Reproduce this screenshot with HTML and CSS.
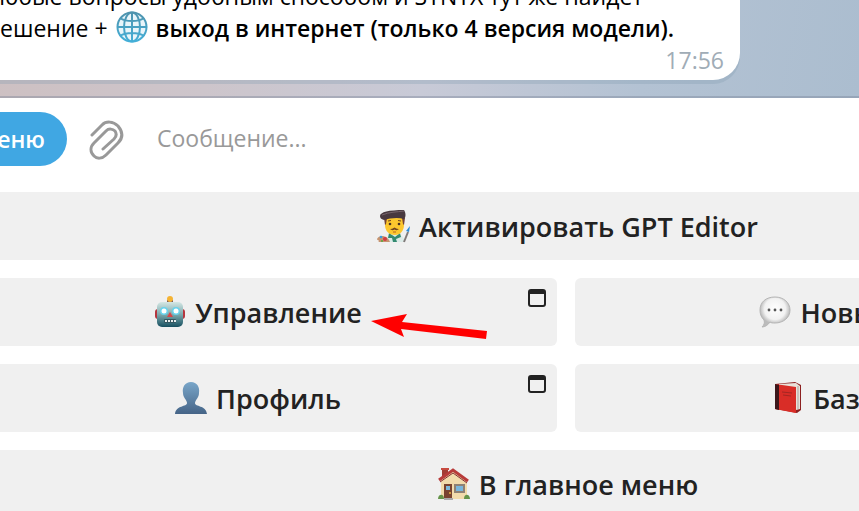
FILE: index.html
```
<!DOCTYPE html>
<html lang="ru">
	<head>
		<meta charset="utf-8">
		<title>Чат</title>
		<link rel="stylesheet" href="styles.css">
	</head>
	<body>
		<main class="chat">
			<div class="history">
				<div class="bubble">
					<p>любые вопросы удобным способом и SYNTX тут же найдет<br>
					решение + <svg class="emoji globe" viewBox="0 0 34 34" aria-hidden="true">
						<defs><linearGradient id="sea" x2="0" y2="1"><stop stop-color="#4f93ad"/><stop offset="1" stop-color="#43afd8"/></linearGradient></defs>
						<circle cx="17" cy="17" r="14.5" fill="#e9f5fa" stroke="url(#sea)" stroke-width="2"/>
						<g fill="none" stroke="url(#sea)" stroke-width="2">
							<ellipse cx="17" cy="17" rx="8" ry="14.5"/>
							<path d="M17 2V32.1M2 17H32.1M5 8C11 12 23 12 29 8M5 26C11 22 23 22 29 26"/>
						</g>
					</svg> <b>выход в интернет (только 4 версия модели).</b></p>
					<time>17:56</time>
				</div>
			</div>

			<form class="composer">
				<button type="button" class="menu">Меню</button>
				<button type="button" class="attach" aria-label="Прикрепить">
					<svg viewBox="0 0 36 40"><path d="M3 15L13 5C17 1 24 1 29 6C34 12 34 18 29 23L17 35C13 39 8 39 5 36C1 32 1 27 5 23L17 11C20 8 24 9 26 11C28 14 27 17 25 19L14 29"/></svg>
				</button>
				<input type="text" class="message" aria-label="Сообщение" placeholder="Сообщение...">
			</form>

			<div class="keyboard">
				<button type="button" class="key wide">
					<svg class="emoji" viewBox="0 0 34 34" aria-hidden="true">
						<path d="M8 33L10 28L15 25H21L26 28L28 33Z" fill="#dcebe8"/>
						<path d="M12 24L18 28L23 24L24 28L19 30L20 33H16L15 29L11 29Z" fill="#348a70"/>
						<path d="M8 9H27V16C27 22 23 26 18 26C12 26 8 22 8 16Z" fill="#fcc72e"/>
						<path d="M7 9H10L9 15L8 16ZM25 9H28L27 16L26 15Z" fill="#754335"/>
						<path d="M3 7C3 3 12 1 27 1C29 4 29 8 27 10C21 8 13 9 7 11C4 10 3 9 3 7Z" fill="#49393f"/>
						<path d="M5 6C12 3 20 3 27 2" stroke="#76646b" fill="none"/>
						<path d="M11 12L14 11.5M21 11.5L24 12" stroke="#70441f" fill="none"/>
						<circle cx="13" cy="15" r="1.3" fill="#493020"/><circle cx="22" cy="15" r="1.3" fill="#493020"/>
						<path d="M13 20Q15 20 17.5 18.5Q20 20 22 20Q20 22 17.5 20.5Q15 22 13 20Z" fill="#70441f"/>
						<path d="M16 23H19" stroke="#b66325"/>
						<path d="M0 30C2 25 11 26 13 33H1C4 31 0 32 0 30Z" fill="#c69470"/>
						<circle cx="4" cy="28" r="1.3" fill="#3b9be0"/><circle cx="8" cy="30" r="2" fill="#d43a44"/><circle cx="5" cy="32" r="1" fill="#55a93d"/>
						<path d="M27 33L31 23" stroke="#807a79" stroke-width="2"/><path d="M29 22L33 17L32 23Z" fill="#298bd8"/>
					</svg>
					<span>Активировать GPT Editor</span>
				</button>

				<button type="button" class="key">
					<svg class="emoji" viewBox="0 0 34 34" aria-hidden="true">
						<defs><linearGradient id="metal" x2="0" y2="1"><stop stop-color="#d5e7e4"/><stop offset=".5" stop-color="#7ba9ad"/><stop offset="1" stop-color="#174f60"/></linearGradient></defs>
						<rect x="2" y="14" width="30" height="10" rx="3" fill="#b5353e"/>
						<path d="M14 5H20V9H14Z" fill="#66506c"/><circle cx="17" cy="4" r="3" fill="#f4b334"/>
						<rect x="4" y="7" width="26" height="25" rx="5" fill="url(#metal)"/>
						<circle cx="11" cy="16" r="4" fill="#68d3ed"/><circle cx="23" cy="16" r="4" fill="#68d3ed"/>
						<circle cx="11" cy="16" r="2.5" fill="#fff"/><circle cx="23" cy="16" r="2.5" fill="#fff"/>
						<path d="M17 17L20 22H14Z" fill="#d94548"/>
						<rect x="11" y="24" width="12" height="4" rx="1" fill="#345761"/><path d="M12 26H23" stroke="#e8eded" stroke-width="2" stroke-dasharray="2 1"/>
					</svg>
					<span>Управление</span>
					<svg class="window" viewBox="0 0 18 18" aria-hidden="true"><rect x="1" y="1" width="16" height="16" rx="2"/><path d="M2 3H16"/></svg>
					<svg class="arrow" viewBox="0 0 116 28" aria-hidden="true"><path d="M0 8L36 1L31 9L116 18L115 26L30 16L33 24Z"/></svg>
				</button>
				<button type="button" class="key right">
					<svg class="emoji" viewBox="0 0 34 34" aria-hidden="true">
						<defs><radialGradient id="speech" cy=".4"><stop stop-color="#fff"/><stop offset=".7" stop-color="#f2f2f2"/><stop offset="1" stop-color="#bbb"/></radialGradient></defs>
						<path d="M17 2C26 2 32 8 32 15C32 23 25 28 17 28C15 28 13 28 12 27C10 30 7 32 4 32C6 30 7 28 6 25C3 22 2 19 2 15C2 7 8 2 17 2Z" fill="url(#speech)" stroke="#b5b5b5"/>
						<g fill="#555"><circle cx="11" cy="15" r="1.4"/><circle cx="17" cy="15" r="1.4"/><circle cx="23" cy="15" r="1.4"/></g>
					</svg>
					<span>Новый диалог</span>
				</button>

				<button type="button" class="key">
					<svg class="emoji" viewBox="0 0 34 34" aria-hidden="true">
						<defs><linearGradient id="person" x2="0" y2="1"><stop stop-color="#79a6c9"/><stop offset="1" stop-color="#456487"/></linearGradient></defs>
						<path d="M17 1C23 1 26 6 25 12C25 17 21 19 21 22C21 26 32 24 33 33H1C2 24 13 26 13 22C13 19 9 17 9 12C8 6 11 1 17 1Z" fill="url(#person)"/>
					</svg>
					<span>Профиль</span>
					<svg class="window" viewBox="0 0 18 18" aria-hidden="true"><rect x="1" y="1" width="16" height="16" rx="2"/><path d="M2 3H16"/></svg>
				</button>
				<button type="button" class="key right">
					<svg class="emoji" viewBox="0 0 34 34" aria-hidden="true">
						<path d="M4 3L24 1L30 4V29L26 32L5 28Z" fill="#8c2020"/>
						<path d="M8 3L25 2L29 5V28L25 29L8 27Z" fill="#e8e2da"/>
						<path d="M27 5V28" stroke="#aaa39e"/>
						<path d="M4 3L25 6V32L4 28Z" fill="#d92d27"/><path d="M4 3L8 4V29L4 28Z" fill="#3c171b"/>
						<path d="M11 11L21 12M12 14L20 15" stroke="#a42622"/>
					</svg>
					<span>База знаний</span>
				</button>

				<button type="button" class="key wide">
					<svg class="emoji" viewBox="0 0 34 34" aria-hidden="true">
						<path d="M5 2H11V12H5Z" fill="#a23c34"/><path d="M4 2H12" stroke="#c74b40" stroke-width="2"/>
						<path d="M4 13L16 3L30 14V32H4Z" fill="#f2dbac"/>
						<path d="M2 13L16 3L31 14" fill="none" stroke="#b83b3a" stroke-width="3"/>
						<path d="M3 15L16 6L30 16" fill="none" stroke="#853033"/>
						<path d="M7 17H15V32H7Z" fill="#794330"/><path d="M9 19H13V23H9Z" fill="#7eb9dc"/><circle cx="13" cy="26" r="1" fill="#e6b642"/>
						<path d="M18 18H27V25H18Z" fill="#79b6dc" stroke="#8f8174" stroke-width="2"/>
						<path d="M1 32C1 27 7 26 7 32M27 32C27 26 33 27 33 32" fill="#65944a"/>
						<path d="M7 32H16" stroke="#aaa" stroke-width="2"/>
					</svg>
					<span>В главное меню</span>
				</button>
			</div>
		</main>
	</body>
</html>
```
FILE: styles.css
```
* {
	box-sizing: border-box;
}
body {
	margin: 0;
	background-color: #fff;
	font-family: "Open Sans", "Noto Sans", sans-serif;
	font-size: 23px;
	overflow: hidden;
}
button, input {
	font: inherit;
	border: 0;
	padding: 0;
}
.chat {
	overflow: hidden;
}
.history {
	height: 98px;
	display: flex;
	align-items: flex-end;
	padding-bottom: 16px;
	border-bottom: 2px solid rgba(120, 130, 150, 0.4);
	background: linear-gradient(100deg, #cdc0c2 0, #cdc5cb 25%, #c8cad7 50%, #b3c2d3 75%, #abbdcf 100%);
	background-origin: border-box;
}
.bubble {
	width: 760px;
	flex-shrink: 0;
	margin-left: -20px;
	padding: 0 16px 4px 6px;
	border-radius: 0 0 27px 0;
	background-color: #fff;
	box-shadow: 0 4px 0 rgba(130, 155, 175, 0.3);
	color: #000;
	white-space: nowrap;
}
.bubble p {
	margin: 0;
	line-height: 32px;
}
.bubble b {
	font-weight: 600;
}
.bubble time {
	display: block;
	text-align: right;
	font-size: 23px;
	line-height: 32px;
	color: #a0acb6;
}
.emoji {
	width: 34px;
	height: 34px;
	flex-shrink: 0;
}
.globe {
	vertical-align: middle;
	margin: -12px 1px -4px;
}
.composer {
	height: 94px;
	display: flex;
	align-items: flex-start;
	padding-top: 14px;
}
.menu {
	width: 109px;
	height: 54px;
	flex-shrink: 0;
	margin-left: -42px;
	padding-right: 22px;
	border-radius: 27px;
	background-color: #40a7e3;
	color: #fff;
	font-weight: 600;
	text-align: right;
}
.attach {
	width: 36px;
	height: 54px;
	margin: 0 32px 0 22px;
	background: none;
}
.attach svg {
	display: block;
	width: 36px;
	height: 40px;
	margin-top: 2px;
	fill: none;
	stroke: #999;
	stroke-width: 3;
	stroke-linecap: round;
}
.message {
	flex: 1;
	height: 52px;
	background: none;
	outline: 0;
}
.message::placeholder {
	color: #999;
	opacity: 1;
}
/* the keyboard is wider than the window on both sides */
.keyboard {
	display: grid;
	grid-template-columns: 1fr 1fr;
	gap: 18px;
	margin: 0 -315px 0 -42px;
}
.key {
	position: relative;
	height: 68px;
	display: flex;
	align-items: center;
	justify-content: center;
	gap: 8px;
	border-radius: 6px;
	background-color: #f0f0f0;
	color: #222;
	font-size: 27px;
	font-weight: 600;
	white-space: nowrap;
}
.wide {
	grid-column: span 2;
	padding-left: 3px;
}
.right {
	padding-left: 6px;
}
.window {
	position: absolute;
	top: 11px;
	right: 11px;
	width: 18px;
	height: 18px;
	fill: none;
	stroke: #222;
	stroke-width: 2;
}
.window path {
	stroke-width: 4;
}
.arrow {
	position: absolute;
	top: 35px;
	right: 70px;
	width: 116px;
	height: 28px;
	fill: #f00;
}
```
